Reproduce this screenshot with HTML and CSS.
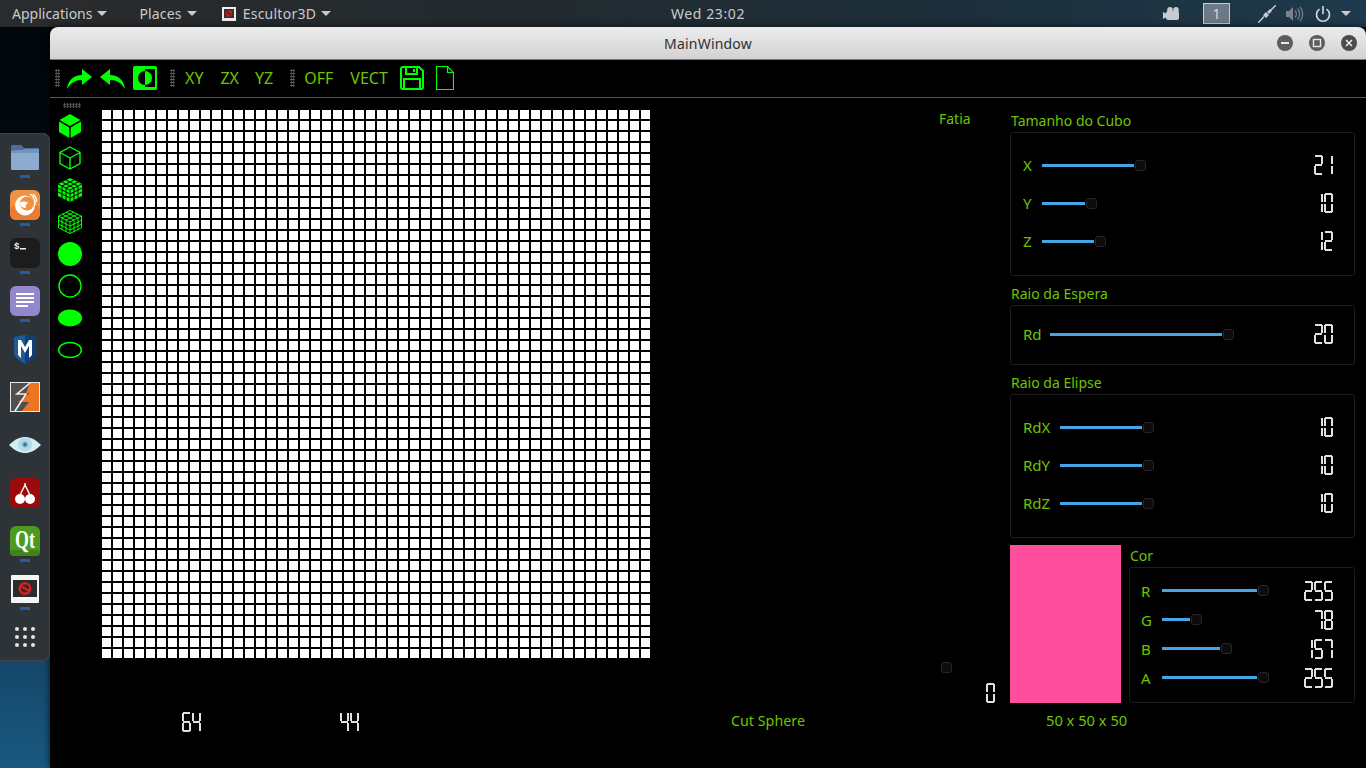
FILE: index.html
```html
<!DOCTYPE html>
<html lang="en">
<head>
<meta charset="utf-8">
<title>MainWindow</title>
<link rel="stylesheet" href="styles.css">
</head>
<body>
<header class="topbar">
  <div class="top-left">
    <span class="menu menu-apps">Applications<i class="caret"></i></span>
    <span class="menu menu-places">Places<i class="caret"></i></span>
    <span class="menu menu-app">
      <svg class="app-mini" viewBox="0 0 14 14" width="14" height="14"><rect width="14" height="14" fill="#eee"/><rect x="2" y="2" width="10" height="9" fill="#333"/><circle cx="7" cy="6.5" r="3.2" fill="#d01818"/><path d="M5 5l4 3" stroke="#300" stroke-width="1"/></svg>
      Escultor3D<i class="caret"></i>
    </span>
  </div>
  <div class="clock">Wed 23:02</div>
  <div class="top-right">
    <svg class="tray-cam" viewBox="0 0 16 13" width="16" height="13"><path d="M0 5l3 1.500V6a2 2 0 0 1 2-2h9a2 2 0 0 1 2 2v5a2 2 0 0 1-2 2H5a2 2 0 0 1-2-2v-.5L0 12z" fill="#c8ccd0"/><circle cx="7" cy="2.800" r="2.800" fill="#c8ccd0"/><circle cx="13" cy="2.800" r="2.800" fill="#c8ccd0"/></svg>
    <span class="workspace">1</span>
    <svg class="tray-plug" viewBox="0 0 18 18" width="18" height="18"><path d="M0 18L6 11.500M12 6L18 0" stroke="#c8ccd0" stroke-width="1.500"/><path d="M5 10l3-3 3 3-3 3zM9 7l3-3 2 2-3 3z" fill="#c8ccd0"/></svg>
    <svg class="tray-sound" viewBox="0 0 18 16" width="18" height="16"><path d="M0 5h3l4-4v14l-4-4H0z" fill="#7c8288"/><path d="M9 4.500a5 5 0 0 1 0 7M11.500 2.500a8 8 0 0 1 0 11M14 .8a11 11 0 0 1 0 14.400" fill="none" stroke="#7c8288" stroke-width="1.200"/></svg>
    <svg class="tray-power" viewBox="0 0 16 16" width="16" height="16"><path d="M4.500 3.200a6.500 6.500 0 1 0 7 0" fill="none" stroke="#d8dadc" stroke-width="1.600"/><path d="M8 0v8" stroke="#d8dadc" stroke-width="1.600"/></svg>
    <i class="caret caret-end"></i>
  </div>
</header>

<div class="desk">
  <nav class="dock">
    <div class="dock-item pad-3">
      <svg viewBox="0 0 30 26" width="30" height="26"><path d="M1 2a1 1 0 0 1 1-1h9l3 3h14a1 1 0 0 1 1 1v5H1z" fill="#4a6f9c"/><path d="M1 7l12-1 3-1h13v20a1 1 0 0 1-1 1H2a1 1 0 0 1-1-1z" fill="#8cabcf"/><path d="M1 7l12-1 3-1h13v4H1z" fill="#7194bd"/></svg>
      <span class="dot"></span>
    </div>
    <div class="dock-item">
      <svg viewBox="0 0 30 30" width="30" height="30"><rect width="30" height="30" rx="6" fill="#f2913f"/><rect y="15" width="30" height="15" rx="6" fill="#ea7c30"/><circle cx="15" cy="15.500" r="10" fill="#fff"/><circle cx="17" cy="13.500" r="7" fill="#f2913f"/><path d="M10 13c2-2 6-2 8 0-2 1-3 3-2 5-3 0-6-2-6-5z" fill="#fff"/><path d="M20 4c3 2 5.500 6 5 11M23 4c2 2 4 5 3.500 8" fill="none" stroke="#fff" stroke-width="1.300"/></svg>
      <span class="dot"></span>
    </div>
    <div class="dock-item">
      <svg viewBox="0 0 30 30" width="30" height="30"><rect width="30" height="30" rx="6" fill="#1c1c1c"/><text x="4" y="11" class="term-text">$</text><rect x="10" y="10" width="6" height="1.500" fill="#eee"/></svg>
      <span class="dot"></span>
    </div>
    <div class="dock-item">
      <svg viewBox="0 0 30 30" width="30" height="30"><rect width="30" height="30" rx="6" fill="#9488cc"/><path d="M6 8h18M6 12h18M6 16h18M6 20h12" stroke="#fff" stroke-width="1.800"/></svg>
      <span class="dot"></span>
    </div>
    <div class="dock-item pad-2">
      <svg viewBox="0 0 22 29" width="22" height="29"><path d="M0 2L11 0l11 2v16c0 4-6 8-11 11C6 26 0 22 0 18z" fill="#1c5a9c"/><path d="M11 0l11 2v16c0 4-6 8-11 11z" fill="#123f73"/><path d="M4 20V5h3l4 7 4-7h3v15l-3 3V11l-4 7-4-7v12z" fill="#fff"/></svg>
    </div>
    <div class="dock-item">
      <svg viewBox="0 0 30 30" width="30" height="30"><rect width="30" height="30" fill="#e8e8e8"/><rect x="1" y="1" width="28" height="28" fill="#505050"/><path d="M20 1h9v28H12l7-9H8l12-9h-4z" fill="#ee7424"/><path d="M20 1L7 12h9L5 29" fill="none" stroke="#f0f0f0" stroke-width="1.600"/></svg>
    </div>
    <div class="dock-item pad-8">
      <svg viewBox="0 0 32 16" width="32" height="16"><path d="M0 8C6 2 11 0 16 0s10 2 16 8c-6 6-11 8-16 8S6 14 0 8z" fill="#d4ecf4"/><circle cx="16" cy="7.500" r="7" fill="#b4d9e8"/><circle cx="16" cy="7.500" r="3" fill="#7fb0c8"/><circle cx="16" cy="7.500" r="1.500" fill="#3a6a84"/></svg>
    </div>
    <div class="dock-item">
      <svg viewBox="0 0 30 30" width="30" height="30"><rect width="30" height="30" rx="6" fill="#9c0a0a"/><circle cx="10" cy="21" r="5" fill="#fff"/><circle cx="20" cy="21" r="5" fill="#fff"/><path d="M10 17l5-10 5 10M15 7V5" fill="none" stroke="#fff" stroke-width="1.400"/></svg>
    </div>
    <div class="dock-item">
      <svg viewBox="0 0 30 30" width="30" height="30"><rect width="30" height="30" rx="6" fill="#4e9a1e"/><rect y="24" width="30" height="6" rx="4" fill="#3f8416"/><text transform="translate(5 22) scale(.69 1)" class="qt-text">Qt</text></svg>
      <span class="dot"></span>
    </div>
    <div class="dock-item pad-2">
      <svg viewBox="0 0 28 28" width="28" height="28"><rect width="28" height="28" rx="1" fill="#f4f4f4"/><rect x="2" y="5" width="24" height="17" fill="#2c2c2c"/><circle cx="14" cy="13.500" r="6.500" fill="#d81e1e"/><circle cx="14" cy="13.500" r="4" fill="#2c2c2c"/><path d="M10 11l8 5" stroke="#d81e1e" stroke-width="2.200"/></svg>
      <span class="dot"></span>
    </div>
    <div class="dock-grid">
      <i></i><i></i><i></i><i></i><i></i><i></i><i></i><i></i><i></i>
    </div>
  </nav>

  <main class="window">
    <div class="titlebar">
      <span class="title">MainWindow</span>
      <div class="win-btns">
        <svg viewBox="0 0 16 16" width="16" height="16"><circle cx="8" cy="8" r="8" fill="#5d5d5d"/><rect x="4" y="7" width="8" height="2" fill="#e8e8e8"/></svg>
        <svg viewBox="0 0 16 16" width="16" height="16"><circle cx="8" cy="8" r="8" fill="#5d5d5d"/><rect x="4.500" y="4.500" width="7" height="7" fill="none" stroke="#e8e8e8" stroke-width="1.400"/></svg>
        <svg viewBox="0 0 16 16" width="16" height="16"><circle cx="8" cy="8" r="8" fill="#4b4b4b"/><path d="M5 5l6 6M11 5l-6 6" stroke="#f0f0f0" stroke-width="1.500"/></svg>
      </div>
    </div>

    <div class="toolbar">
      <i class="handle"></i>
      <svg class="t-redo" viewBox="0 0 25 20" width="25" height="20"><path d="M0 20C1 11 7 6 15 6V0l10 8-10 8v-5C8 11 4 14 0 20z" fill="#00ff00"/></svg>
      <svg class="t-undo" viewBox="0 0 25 20" width="25" height="20"><path d="M25 20C24 11 18 6 10 6V0L0 8l10 8v-5c7 0 11 3 15 9z" fill="#00ff00"/></svg>
      <svg class="t-contrast" viewBox="0 0 24 24" width="24" height="24"><rect width="24" height="24" rx="2" fill="#00ff00"/><rect x="12" y="3" width="10" height="18" fill="#000"/><path d="M12 5a7 7 0 0 1 0 14z" fill="#00ff00"/><path d="M12 5a7 7 0 0 0 0 14z" fill="#000"/></svg>
      <i class="handle h-2"></i>
      <span class="t-btn b-xy">XY</span>
      <span class="t-btn b-zx">ZX</span>
      <span class="t-btn b-yz">YZ</span>
      <i class="handle h-3"></i>
      <span class="t-btn b-off">OFF</span>
      <span class="t-btn b-vect">VECT</span>
      <svg class="t-save" viewBox="0 0 24 24" width="24" height="24"><path d="M1 3a2 2 0 0 1 2-2h16l4 4v16a2 2 0 0 1-2 2H3a2 2 0 0 1-2-2z" fill="none" stroke="#00ff00" stroke-width="2"/><path d="M6 1v7h11V1M4 23V13h16v10" fill="none" stroke="#00ff00" stroke-width="2"/><rect x="13" y="3" width="2" height="3" fill="#00ff00"/></svg>
      <svg class="t-new" viewBox="0 0 18 24" width="18" height="24"><path d="M.5.500h11l6 6v17H.5zM11.500.500v6h6" fill="none" stroke="#00ff00" stroke-width="1.200"/></svg>
    </div>

    <div class="content">
      <aside class="shapes">
        <i class="shape-handle"></i>
        <svg viewBox="0 0 24 24" width="24" height="24"><path d="M12 0l10.500 6-10.500 6L1.500 6z" fill="#00ff00"/><path d="M1 7.500l10.300 6V24L1 18zM23 7.500l-10.300 6V24L23 18z" fill="#00ff00"/></svg>
        <svg viewBox="0 0 24 24" width="24" height="24"><path d="M12 1l10 5.500v11L12 23 2 17.500v-11zM2 6.500L12 12l10-5.500M12 12v11" fill="none" stroke="#00ff00" stroke-width="1.400"/></svg>
        <svg viewBox="0 0 24 24" width="24" height="24"><path d="M12 0l12 6v12l-12 6L0 18V6z" fill="#00ff00"/><path d="M0 6l12 6 12-6M12 12v12M4 8v12M8 10v12M16 10v12M20 8v12M0 10l12 6 12-6M0 14l12 6 12-6M4 4l12 6M8 2l12 6M8 10l12-6M4 8l12-6" fill="none" stroke="#000" stroke-width="1"/></svg>
        <svg viewBox="0 0 24 24" width="24" height="24"><path d="M12 .5l11.500 5.700v11.600L12 23.500.5 17.800V6.200zM.5 6l11.500 6 11.500-6M12 12v12M4 8v12M8 10v12M16 10v12M20 8v12M0 10l12 6 12-6M0 14l12 6 12-6M4 4l12 6M8 2l12 6M8 10l12-6M4 8l12-6" fill="none" stroke="#00ff00" stroke-width="1"/></svg>
        <svg viewBox="0 0 24 24" width="24" height="24"><circle cx="12" cy="12" r="12" fill="#00ff00"/></svg>
        <svg viewBox="0 0 24 24" width="24" height="24"><circle cx="12" cy="12" r="11" fill="none" stroke="#00ff00" stroke-width="1.400"/></svg>
        <svg viewBox="0 0 24 24" width="24" height="24"><ellipse cx="12" cy="12" rx="12" ry="8.500" fill="#00ff00"/></svg>
        <svg viewBox="0 0 24 24" width="24" height="24"><ellipse cx="12" cy="12" rx="11.300" ry="7.500" fill="none" stroke="#00ff00" stroke-width="1.400"/></svg>
      </aside>

      <div class="stage">
        <div class="stage-top">
          <div class="voxels"></div>

          <div class="fatia">
            <span class="label fatia-label">Fatia</span>
            <span class="handle-knob fatia-knob"></span>
            <div class="lcd fatia-lcd"><span class="dg d0">0</span></div>
          </div>

          <div class="panels">
            <div class="label group-title">Tamanho do Cubo</div>
            <section class="box box-size">
              <div class="row"><span class="label key">X</span><div class="slider"><span class="fill" style="width:92px"></span><span class="handle-knob"></span></div><div class="lcd"><span class="dg d2">2</span><span class="dg d1">1</span></div></div>
              <div class="row"><span class="label key">Y</span><div class="slider"><span class="fill" style="width:43px"></span><span class="handle-knob"></span></div><div class="lcd"><span class="dg d1">1</span><span class="dg d0">0</span></div></div>
              <div class="row"><span class="label key">Z</span><div class="slider"><span class="fill" style="width:52px"></span><span class="handle-knob"></span></div><div class="lcd"><span class="dg d1">1</span><span class="dg d2">2</span></div></div>
            </section>

            <div class="label group-title gt-next">Raio da Espera</div>
            <section class="box box-sphere">
              <div class="row"><span class="label key key-rd">Rd</span><div class="slider"><span class="fill" style="width:172px"></span><span class="handle-knob"></span></div><div class="lcd"><span class="dg d2">2</span><span class="dg d0">0</span></div></div>
            </section>

            <div class="label group-title gt-next">Raio da Elipse</div>
            <section class="box box-ellipse">
              <div class="row"><span class="label key key-rdx">RdX</span><div class="slider"><span class="fill" style="width:82px"></span><span class="handle-knob"></span></div><div class="lcd"><span class="dg d1">1</span><span class="dg d0">0</span></div></div>
              <div class="row"><span class="label key key-rdx">RdY</span><div class="slider"><span class="fill" style="width:82px"></span><span class="handle-knob"></span></div><div class="lcd"><span class="dg d1">1</span><span class="dg d0">0</span></div></div>
              <div class="row"><span class="label key key-rdx">RdZ</span><div class="slider"><span class="fill" style="width:82px"></span><span class="handle-knob"></span></div><div class="lcd"><span class="dg d1">1</span><span class="dg d0">0</span></div></div>
            </section>

            <div class="color-area">
              <div class="swatch"></div>
              <div class="color-col">
                <div class="label cor-title">Cor</div>
                <section class="box box-color">
                  <div class="row"><span class="label key">R</span><div class="slider"><span class="fill" style="width:95px"></span><span class="handle-knob"></span></div><div class="lcd"><span class="dg d2">2</span><span class="dg d5">5</span><span class="dg d5">5</span></div></div>
                  <div class="row"><span class="label key">G</span><div class="slider"><span class="fill" style="width:28px"></span><span class="handle-knob"></span></div><div class="lcd"><span class="dg d7">7</span><span class="dg d8">8</span></div></div>
                  <div class="row"><span class="label key">B</span><div class="slider"><span class="fill" style="width:58px"></span><span class="handle-knob"></span></div><div class="lcd"><span class="dg d1">1</span><span class="dg d5">5</span><span class="dg d7">7</span></div></div>
                  <div class="row"><span class="label key">A</span><div class="slider"><span class="fill" style="width:95px"></span><span class="handle-knob"></span></div><div class="lcd"><span class="dg d2">2</span><span class="dg d5">5</span><span class="dg d5">5</span></div></div>
                </section>
              </div>
            </div>
          </div>
        </div>

        <div class="status">
          <div class="lcd st-a"><span class="dg d6">6</span><span class="dg d4">4</span></div>
          <div class="lcd st-b"><span class="dg d4">4</span><span class="dg d4">4</span></div>
          <span class="label st-c">Cut Sphere</span>
          <span class="label st-d">50 x 50 x 50</span>
        </div>
      </div>
    </div>
  </main>
</div>
</body>
</html>
```

FILE: styles.css
```css
* { box-sizing: border-box; }
html, body { margin: 0; padding: 0; }
body {
  width: 1366px;
  height: 768px;
  overflow: hidden;
  display: flex;
  flex-direction: column;
  font-family: "Noto Sans", "Open Sans", sans-serif;
  background: linear-gradient(180deg, #01060a 0%, #020b12 30%, #0e3450 70%, #1a5880 100%);
}

/* top bar */
.topbar {
  height: 27px;
  flex: none;
  display: flex;
  align-items: center;
  color: #c8cacc;
  font-size: 14px;
  background: linear-gradient(90deg, #2a2b2c 0%, #232a2e 35%, #1c2e3a 70%, #1e3a4c 100%);
}
.top-left { width: 600px; flex: none; display: flex; align-items: center; padding-left: 12px; }
.menu { display: flex; align-items: center; }
.menu-places { margin-left: 32px; letter-spacing: .15px; }
.menu-app { margin-left: 25px; letter-spacing: .25px; }
.app-mini { margin-right: 7px; }
.caret {
  width: 0; height: 0;
  margin-left: 5px;
  border-left: 5px solid transparent;
  border-right: 5px solid transparent;
  border-top: 5px solid #c8cacc;
}
.clock { width: 216px; flex: none; text-align: center; color: #c8cacc; letter-spacing: .6px; }
.top-right { flex: 1; display: flex; align-items: center; justify-content: flex-end; padding-right: 15px; }
.tray-cam { margin-right: 24px; }
.workspace {
  width: 27px; height: 21px;
  border: 1px solid #c8ccd0;
  background: #6d7a85;
  color: #d4d8dc;
  font-size: 14px;
  line-height: 19px;
  text-align: center;
  margin-right: 28px;
}
.tray-plug { margin-right: 10px; }
.tray-sound { margin-right: 11px; }
.caret-end { margin-left: 10px; }

/* desk + dock */
.desk { flex: 1; display: flex; min-height: 0; }
.dock {
  width: 50px;
  flex: none;
  height: 528px;
  margin-top: 106px;
  padding-top: 8px;
  position: relative;
  z-index: 1;
  background: #2d3337;
  box-shadow: inset 0 1px #3e4448, inset -1px 0 #3e4448, inset 0 -1px #3e4448;
  border-radius: 0 8px 8px 0;
  display: flex;
  flex-direction: column;
  align-items: center;
}
.dock-item {
  height: 48px;
  flex: none;
  width: 100%;
  display: flex;
  flex-direction: column;
  align-items: center;
  padding-top: 1px;
  position: relative;
}
.pad-2 { padding-top: 2px; }
.pad-3 { padding-top: 3px; }
.pad-8 { padding-top: 8px; }
.dock-item svg { display: block; }
.dot {
  position: absolute;
  left: 20px;
  top: 34px;
  width: 10px;
  height: 3px;
  background: #2a5a9a;
}
.term-text { fill: #eee; font: bold 9px "Liberation Mono", monospace; }
.qt-text { fill: #fff; font: bold 26px "Liberation Serif", serif; }
.dock-grid {
  margin-top: 6px;
  display: grid;
  grid-template-columns: repeat(3, 4px);
  gap: 4px;
}
.dock-grid i { width: 4px; height: 4px; border-radius: 50%; background: #e4e6e8; }

/* window */
.window {
  flex: 1;
  min-width: 0;
  display: flex;
  flex-direction: column;
  background: #000;
  box-shadow: 0 0 7px rgba(0, 0, 0, .7);
}
.titlebar {
  height: 33px;
  flex: none;
  position: relative;
  display: flex;
  align-items: center;
  justify-content: center;
  background: linear-gradient(180deg, #ececec, #d2d2d2);
  border-bottom: 1px solid #7c7c7c;
  border-radius: 8px 8px 0 0;
  color: #303030;
  font-size: 14px;
}
.title { letter-spacing: .2px; }
.win-btns {
  position: absolute;
  right: 9px;
  top: 8px;
  display: flex;
  gap: 16px;
}
.win-btns svg { display: block; }

.toolbar {
  height: 38px;
  flex: none;
  border-bottom: 1px solid #565656;
  display: flex;
  align-items: center;
  padding-left: 5px;
  padding-bottom: 1px;
}
.handle {
  width: 5px;
  height: 18px;
  flex: none;
  background-image: radial-gradient(circle, #5a5a5a 1px, transparent 1.100px);
  background-size: 2.500px 3px;
}
.t-redo { margin-left: 7px; margin-top: 2px; }
.t-undo { margin-left: 8px; margin-top: 2px; }
.t-contrast { margin-left: 8px; }
.h-2 { margin-left: 13px; }
.h-3 { margin-left: 17px; }
.t-btn { color: #6ec400; font-size: 16px; line-height: 20px; }
.b-xy { margin-left: 10px; }
.b-zx { margin-left: 17px; }
.b-yz { margin-left: 16px; }
.b-off { margin-left: 9px; }
.b-vect { margin-left: 17px; }
.t-save { margin-left: 12px; }
.t-new { margin-left: 12px; }

.content { flex: 1; display: flex; min-height: 0; }
.shapes {
  width: 52px;
  flex: none;
  padding-top: 5px;
  padding-left: 8px;
  display: flex;
  flex-direction: column;
  align-items: flex-start;
}
.shapes svg { display: block; margin-bottom: 8px; flex: none; }
.shape-handle {
  width: 18px;
  height: 5px;
  margin-left: 5px;
  margin-bottom: 6px;
  flex: none;
  background-image: radial-gradient(circle, #5a5a5a 1px, transparent 1.100px);
  background-size: 3px 2.500px;
}

.stage { flex: 1; min-width: 0; display: flex; flex-direction: column; }
.stage-top { display: flex; padding-top: 12px; padding-right: 11px; height: 605px; flex: none; }

.voxels {
  width: 548px;
  height: 548px;
  flex: none;
  background-color: #fff;
  background-image:
    linear-gradient(90deg, transparent 9px, #000 9px),
    linear-gradient(180deg, transparent 9px, #000 9px);
  background-size: 11px 11px;
}

.label { color: #6ec400; font-size: 14px; line-height: 20px; }

.fatia { flex: 1; min-width: 0; display: flex; flex-direction: column; padding-left: 289px; position: relative; }
.fatia-label { margin-top: -1px; }
.fatia-knob { position: absolute; left: 290px; top: 552px; }
.fatia-lcd { position: absolute; left: 336px; top: 573px; margin: 0; }

.panels { width: 345px; flex: none; display: flex; flex-direction: column; }
.panels > * { flex: none; }
.group-title { height: 22px; padding-left: 1px; padding-top: 1px; }
.gt-next { margin-top: 7px; }

.box {
  border: 1px solid #1c1c1c;
  border-radius: 3px;
  display: flex;
  flex-direction: column;
  justify-content: center;
  padding-bottom: 2px;
}
.box-size { height: 144px; }
.box-sphere { height: 60px; }
.box-ellipse { height: 144px; }
.row { height: 38px; flex: none; display: flex; align-items: center; padding-left: 12px; padding-right: 21px; }
.key { width: 19px; flex: none; font-size: 15px; }
.key-rd { width: 27px; }
.key-rdx { width: 37px; }
.slider { display: flex; align-items: center; }
.fill { display: block; height: 3px; background: #46a5e6; }
.handle-knob {
  display: block;
  width: 11px;
  height: 11px;
  margin-left: 1px;
  background: #0c0c0c;
  border: 1px solid #262626;
  border-radius: 3px;
}
.lcd { margin-left: auto; display: flex; justify-content: flex-end; gap: 1px; flex: none; }

.color-area { display: flex; margin-top: 7px; height: 158px; }
.swatch { width: 111px; height: 158px; flex: none; background: #ff4e9d; }
.color-col { flex: 1; margin-left: 8px; display: flex; flex-direction: column; }
.cor-title { height: 22px; padding-left: 1px; padding-top: 1px; flex: none; }
.box-color { height: 136px; flex: none; }
.box-color .row { height: 29px; padding-left: 11px; }
.box-color .key { width: 21px; }

/* seven-segment digits, painted as CSS background layers; the digit stays as text */
.dg {
  --c: #e0e0e0;
  --a: linear-gradient(var(--c), var(--c)) 1px 0 / 7px 2px no-repeat;
  --b: linear-gradient(var(--c), var(--c)) 100% 1px / 2px 8px no-repeat;
  --cc: linear-gradient(var(--c), var(--c)) 100% 11px / 2px 8px no-repeat;
  --d: linear-gradient(var(--c), var(--c)) 1px 18px / 7px 2px no-repeat;
  --e: linear-gradient(var(--c), var(--c)) 0 11px / 2px 8px no-repeat;
  --f: linear-gradient(var(--c), var(--c)) 0 1px / 2px 8px no-repeat;
  --g: linear-gradient(var(--c), var(--c)) 1px 9px / 7px 2px no-repeat;
  display: block;
  width: 9px;
  height: 20px;
  color: transparent;
  font-size: 12px;
  line-height: 20px;
  text-align: center;
}
.d0 { background: var(--a), var(--b), var(--cc), var(--d), var(--e), var(--f); }
.d1 { background: var(--b), var(--cc); }
.d2 { background: var(--a), var(--b), var(--g), var(--e), var(--d); }
.d4 { background: var(--f), var(--g), var(--b), var(--cc); }
.d5 { background: var(--a), var(--f), var(--g), var(--cc), var(--d); }
.d6 { background: var(--a), var(--f), var(--g), var(--e), var(--cc), var(--d); }
.d7 { background: var(--a), var(--b), var(--cc); }
.d8 { background: var(--a), var(--b), var(--cc), var(--d), var(--e), var(--f), var(--g); }

/* bottom status */
.status { display: flex; align-items: center; height: 37px; flex: none; }
.lcd.st-a { margin-left: 80px; }
.lcd.st-b { margin-left: 139px; }
.st-c { margin-left: 372px; margin-bottom: 2px; font-size: 14.300px; }
.st-d { margin-left: 241px; margin-bottom: 4px; font-size: 14.700px; }
```
